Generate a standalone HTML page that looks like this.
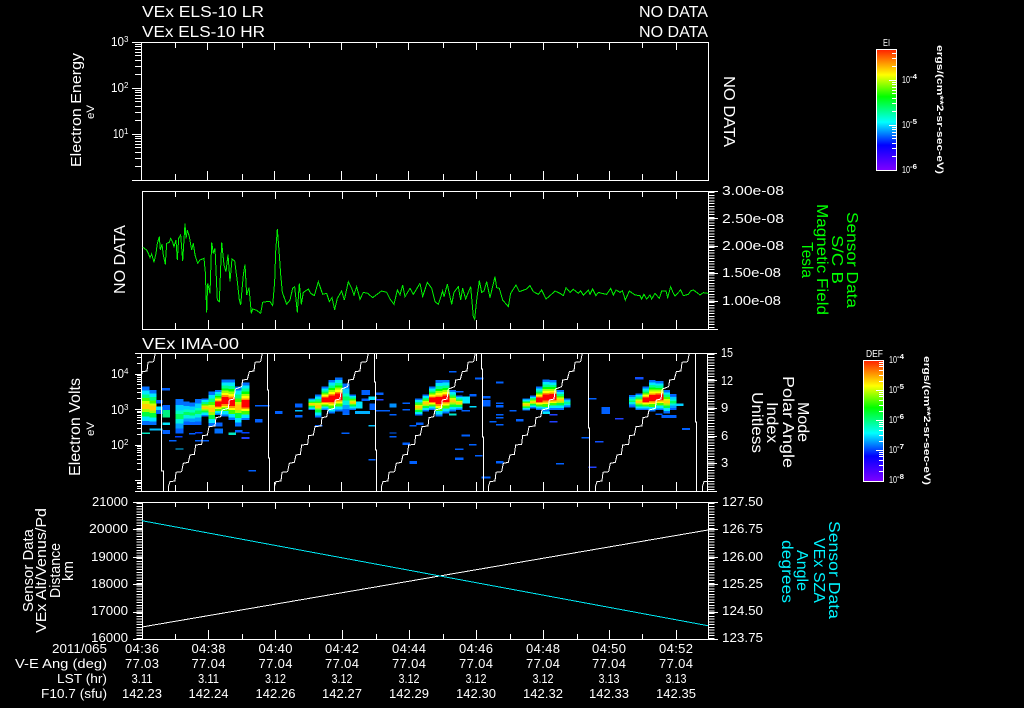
<!DOCTYPE html>
<html lang="en"><head><meta charset="utf-8"><title>VEx plot</title>
<style>
html,body{margin:0;padding:0;background:#000;width:1024px;height:708px;overflow:hidden}
svg{display:block}
text{font-family:"Liberation Sans",sans-serif;fill:#fff;font-size:13px}
.g text{fill:#00ff00}
.c text{fill:#00f4ff}
.t{font-size:15.5px}
.r{font-size:14.5px}
.s{font-size:8px}
.u{font-size:9px;font-weight:bold}
.bar{font-size:10px}
.l{stroke:#fff;stroke-width:1;fill:none;shape-rendering:crispEdges}
.tr{stroke:#fff;stroke-width:3;fill:none;shape-rendering:crispEdges}
.d{fill:none;stroke:#00f000;stroke-width:3;shape-rendering:crispEdges}
rect{shape-rendering:crispEdges}
</style></head><body>
<svg xmlns="http://www.w3.org/2000/svg" width="1024" height="708" viewBox="0 0 1024 708">
<defs>
<linearGradient id="cb" x1="0" y1="0" x2="0" y2="1"><stop offset="0" stop-color="#ff2000"/><stop offset=".21" stop-color="#ffff00"/><stop offset=".39" stop-color="#00ff00"/><stop offset=".6" stop-color="#00ffff"/><stop offset=".79" stop-color="#0000ff"/><stop offset="1" stop-color="#8000ff"/></linearGradient>
<linearGradient id="hi" x1="0" y1="0" x2="0" y2="1">
<stop offset="0" stop-color="#0070ff"/><stop offset=".08" stop-color="#0070ff"/><stop offset=".08" stop-color="#00e8ff"/><stop offset=".16" stop-color="#00e8ff"/><stop offset=".16" stop-color="#00ff90"/><stop offset=".24" stop-color="#00ff90"/><stop offset=".24" stop-color="#00ff00"/><stop offset=".3" stop-color="#00ff00"/><stop offset=".3" stop-color="#a0ff00"/><stop offset=".36" stop-color="#a0ff00"/><stop offset=".36" stop-color="#ffff00"/><stop offset=".42" stop-color="#ffff00"/><stop offset=".42" stop-color="#ff9000"/><stop offset=".47" stop-color="#ff9000"/><stop offset=".47" stop-color="#ff0000"/><stop offset=".66" stop-color="#ff0000"/><stop offset=".66" stop-color="#ff9000"/><stop offset=".71" stop-color="#ff9000"/><stop offset=".71" stop-color="#ffff00"/><stop offset=".76" stop-color="#ffff00"/><stop offset=".76" stop-color="#40ff00"/><stop offset=".85" stop-color="#40ff00"/><stop offset=".85" stop-color="#00e8ff"/><stop offset=".94" stop-color="#00e8ff"/><stop offset=".94" stop-color="#0070ff"/><stop offset="1" stop-color="#0070ff"/></linearGradient>
<linearGradient id="mi" x1="0" y1="0" x2="0" y2="1">
<stop offset="0" stop-color="#0070ff"/><stop offset=".1" stop-color="#0070ff"/><stop offset=".1" stop-color="#00e8ff"/><stop offset=".2" stop-color="#00e8ff"/><stop offset=".2" stop-color="#00ff80"/><stop offset=".3" stop-color="#00ff80"/><stop offset=".3" stop-color="#40ff00"/><stop offset=".38" stop-color="#40ff00"/><stop offset=".38" stop-color="#d0ff00"/><stop offset=".45" stop-color="#d0ff00"/><stop offset=".45" stop-color="#ffd000"/><stop offset=".58" stop-color="#ffd000"/><stop offset=".58" stop-color="#a0ff00"/><stop offset=".66" stop-color="#a0ff00"/><stop offset=".66" stop-color="#00ff40"/><stop offset=".78" stop-color="#00ff40"/><stop offset=".78" stop-color="#00e8ff"/><stop offset=".9" stop-color="#00e8ff"/><stop offset=".9" stop-color="#0070ff"/><stop offset="1" stop-color="#0070ff"/></linearGradient>
<linearGradient id="lo" x1="0" y1="0" x2="0" y2="1">
<stop offset="0" stop-color="#0070ff"/><stop offset=".18" stop-color="#0070ff"/><stop offset=".18" stop-color="#00d0ff"/><stop offset=".34" stop-color="#00d0ff"/><stop offset=".34" stop-color="#00ffc0"/><stop offset=".44" stop-color="#00ffc0"/><stop offset=".44" stop-color="#00ff60"/><stop offset=".58" stop-color="#00ff60"/><stop offset=".58" stop-color="#00f0e0"/><stop offset=".72" stop-color="#00f0e0"/><stop offset=".72" stop-color="#00a0ff"/><stop offset=".86" stop-color="#00a0ff"/><stop offset=".86" stop-color="#0060ff"/><stop offset="1" stop-color="#0060ff"/></linearGradient>
<clipPath id="p3"><rect x="142" y="353" width="566" height="138"/></clipPath>
<path id="st" class="tr" d="M115,439L115,425L120,410L135,408L138,382L155,380L160,355L175,352L180,330L193,328L197,300L215,298L218,272L232,270L237,245L255,243L258,218L272,215L276,195L295,190L298,165L312,162L316,132L335,125L338,105L352,103L358,80L372,78L375,52L392,50L397,25"/>
</defs>
<rect width="1024" height="708" fill="#000"/>

<!-- Titles -->
<text class="t" x="142" y="17" textLength="122" lengthAdjust="spacingAndGlyphs">VEx ELS-10 LR</text>
<text class="t" x="142" y="37" textLength="123" lengthAdjust="spacingAndGlyphs">VEx ELS-10 HR</text>
<text class="t" x="639" y="17" textLength="69" lengthAdjust="spacingAndGlyphs">NO DATA</text>
<text class="t" x="639" y="37" textLength="69" lengthAdjust="spacingAndGlyphs">NO DATA</text>
<text class="t" x="142" y="349" textLength="97" lengthAdjust="spacingAndGlyphs">VEx IMA-00</text>

<!-- Panel 1 -->
<path class="l" d="M132 42.5H708.5V180.5H132M141.5 42.5V180.5
M132 88.5H141M132 134.5H141
M135 74.5H141M135 66.5H141M135 60.5H141M135 55.5H141M135 52.5H141M135 49.5H141M135 46.5H141M135 44.5H141
M135 120.5H141M135 112.5H141M135 106.5H141M135 101.5H141M135 98.5H141M135 95.5H141M135 92.5H141M135 90.5H141
M135 166.5H141M135 158.5H141M135 152.5H141M135 147.5H141M135 144.5H141M135 141.5H141M135 138.5H141M135 136.5H141
M175.5 42V48M242.5 42V48M309.5 42V48M376.5 42V48M443.5 42V48M510.5 42V48M577.5 42V48M642.5 42V48
M207.5 42V50M274.5 42V50M341.5 42V50M408.5 42V50M476.5 42V50M543.5 42V50M609.5 42V50M676.5 42V50
M175.5 174V180M242.5 174V180M309.5 174V180M376.5 174V180M443.5 174V180M510.5 174V180M577.5 174V180M642.5 174V180
M207.5 171V180M274.5 171V180M341.5 171V180M408.5 171V180M476.5 171V180M543.5 171V180M609.5 171V180M676.5 171V180"/>
<text x="111" y="46" textLength="13" lengthAdjust="spacingAndGlyphs">10</text><text class="s" x="124" y="42">3</text>
<text x="111" y="92" textLength="13" lengthAdjust="spacingAndGlyphs">10</text><text class="s" x="124" y="88">2</text>
<text x="113" y="138" textLength="11" lengthAdjust="spacingAndGlyphs">10</text><text class="s" x="124" y="134">1</text>
<text class="r" transform="translate(81,167) rotate(-90)" textLength="114" lengthAdjust="spacingAndGlyphs">Electron Energy</text>
<text transform="translate(94,119) rotate(-90)" style="font-size:11px" textLength="14" lengthAdjust="spacingAndGlyphs">eV</text>
<text class="t" transform="translate(724,76) rotate(90)" textLength="71" lengthAdjust="spacingAndGlyphs">NO DATA</text>

<!-- Panel 2 -->
<path class="l" d="M142 191.5H718M142 329.5H718M142.5 191V330M708.5 191V330
M708 218.5H718M708 246.5H718M708 273.5H718M708 301.5H718
M175.5 191V197M242.5 191V197M309.5 191V197M376.5 191V197M443.5 191V197M510.5 191V197M577.5 191V197M642.5 191V197
M208.5 191V199M275.5 191V199M342.5 191V199M409.5 191V199M476.5 191V199M543.5 191V199M609.5 191V199M676.5 191V199
M175.5 323V329M242.5 323V329M309.5 323V329M376.5 323V329M443.5 323V329M510.5 323V329M577.5 323V329M642.5 323V329
M208.5 320V329M275.5 320V329M342.5 320V329M409.5 320V329M476.5 320V329M543.5 320V329M609.5 320V329M676.5 320V329"/>
<line x1="711.5" y1="192" x2="711.5" y2="329" stroke="#fff" stroke-width="6" stroke-dasharray="1 1.75" shape-rendering="crispEdges"/>
<g transform="translate(100,185) scale(.33333)"><polyline class="d" points="128,186 135,192 140,195 145,205 150,218 155,207 162,232 168,205 172,175 178,155 181,195 186,178 190,210 196,238 200,175 208,172 212,160 218,172 222,185 228,165 232,225 236,160 242,150 248,228 255,115 258,160 262,135 268,155 275,195 280,175 285,210 293,235 300,225 312,220 316,262 320,382 323,295 330,325 335,172 340,205 345,190 352,345 358,350 365,172 372,240 378,260 384,208 390,290 396,222 404,228 412,290 418,345 422,360 430,270 435,238 440,330 447,308 454,385 458,372 470,376 482,385 488,352 500,350 510,350 518,362 524,290 527,200 532,132 538,210 542,268 547,322 560,358 570,345 578,310 584,305 592,382 598,295 604,358 610,322 625,312 632,325 643,332 655,290 668,328 680,325 688,350 696,338 704,374 712,340 725,318 733,345 745,290 755,310 762,330 770,305 780,343 790,322 803,325 818,338 835,325 845,318 860,322 870,342 882,358 892,315 900,330 908,300 915,335 930,310 940,328 960,295"/></g>
<g transform="translate(420,185) scale(.33333)"><polyline class="d" points="0,295 8,335 22,292 35,310 45,350 55,358 68,318 72,335 82,298 95,358 102,322 115,305 122,345 128,310 137,342 152,305 160,395 164,403 170,345 178,287 185,322 192,318 200,290 210,338 225,275 230,308 238,310 248,345 265,365 272,325 288,300 298,320 320,312 330,302 340,320 355,328 365,315 378,342 390,332 405,318 420,325 430,332 438,308 450,322 460,313 475,325 482,318 490,330 505,315 510,328 518,312 528,332 535,322 545,325 560,328 572,310 580,330 588,315 600,322 607,317 616,345 628,318 645,330 660,332 665,342 672,328 680,342 690,330 695,342 705,325 718,340 725,318 738,318 743,338 752,305 760,325 765,333 782,315 790,332 805,328 812,318 820,315 830,322 840,330 850,323 865,325"/></g>
<text x="722" y="195" textLength="62" lengthAdjust="spacingAndGlyphs">3.00e-08</text>
<text x="722" y="223" textLength="62" lengthAdjust="spacingAndGlyphs">2.50e-08</text>
<text x="722" y="250" textLength="62" lengthAdjust="spacingAndGlyphs">2.00e-08</text>
<text x="722" y="277" textLength="59" lengthAdjust="spacingAndGlyphs">1.50e-08</text>
<text x="722" y="305" textLength="59" lengthAdjust="spacingAndGlyphs">1.00e-08</text>
<text class="t" transform="translate(125,294) rotate(-90)" textLength="69" lengthAdjust="spacingAndGlyphs">NO DATA</text>
<g class="g">
<text class="t" transform="translate(847,212) rotate(90)" textLength="96" lengthAdjust="spacingAndGlyphs">Sensor Data</text>
<text class="t" transform="translate(832,235) rotate(90)" textLength="49" lengthAdjust="spacingAndGlyphs">S/C B</text>
<text class="t" transform="translate(817,204) rotate(90)" textLength="111" lengthAdjust="spacingAndGlyphs">Magnetic Field</text>
<text class="t" transform="translate(802,242) rotate(90)" textLength="36" lengthAdjust="spacingAndGlyphs">Tesla</text>
</g>

<!-- Panel 3 spectrogram -->
<g clip-path="url(#p3)">
<g transform="translate(130,345) scale(.33333)">
<rect x="36" y="125" width="22" height="115" fill="url(#mi)"/><rect x="58" y="135" width="22" height="105" fill="url(#mi)"/>
<rect x="36" y="262" width="24" height="5" fill="#00e8c0"/><rect x="58" y="250" width="40" height="7" fill="#00c0ff"/>
<rect x="78" y="165" width="20" height="10" fill="#0060ff"/><rect x="78" y="185" width="20" height="10" fill="#00e8ff"/><rect x="78" y="195" width="20" height="12" fill="#0060ff"/>
<rect x="95" y="129" width="25" height="8" fill="#0060ff"/><rect x="98" y="180" width="22" height="15" fill="#0060ff"/><rect x="98" y="195" width="22" height="23" fill="#00f080"/><rect x="98" y="232" width="22" height="8" fill="#00e8ff"/><rect x="98" y="255" width="22" height="12" fill="#0060ff"/>
<rect x="136" y="162" width="24" height="103" fill="url(#lo)"/><rect x="160" y="170" width="18" height="70" fill="url(#lo)"/><rect x="178" y="172" width="20" height="68" fill="url(#lo)"/><rect x="195" y="162" width="20" height="78" fill="url(#lo)"/><rect x="215" y="160" width="20" height="55" fill="url(#mi)"/><rect x="235" y="140" width="20" height="105" fill="url(#mi)"/><rect x="255" y="135" width="20" height="75" fill="url(#hi)"/><rect x="275" y="103" width="20" height="112" fill="url(#hi)"/><rect x="295" y="103" width="20" height="122" fill="url(#hi)"/><rect x="315" y="125" width="20" height="120" fill="url(#mi)"/><rect x="335" y="113" width="23" height="112" fill="url(#hi)"/>
<rect x="255" y="232" width="22" height="12" fill="#0060ff"/><rect x="253" y="250" width="26" height="16" fill="#0070ff"/><rect x="295" y="262" width="23" height="8" fill="#00e8c0"/><rect x="315" y="255" width="22" height="8" fill="#0060ff"/><rect x="335" y="261" width="24" height="5" fill="#0040ff"/><rect x="335" y="276" width="24" height="6" fill="#2040ff"/>
<rect x="375" y="180" width="43" height="5" fill="#0060ff"/><rect x="375" y="222" width="23" height="11" fill="#0060ff"/><rect x="435" y="198" width="23" height="9" fill="#0060ff"/><rect x="495" y="175" width="23" height="13" fill="#0060ff"/><rect x="495" y="195" width="23" height="5" fill="#00c0ff"/><rect x="495" y="210" width="23" height="8" fill="#0060ff"/><rect x="555" y="240" width="23" height="5" fill="#0060ff"/><rect x="636" y="262" width="22" height="5" fill="#0060ff"/><rect x="117" y="285" width="23" height="5" fill="#0060ff"/><rect x="195" y="285" width="42" height="5" fill="#0060ff"/><rect x="355" y="375" width="23" height="5" fill="#0060ff"/><rect x="136" y="310" width="24" height="4" fill="#00c0ff"/><rect x="135" y="273" width="23" height="5" fill="#0040ff"/><rect x="177" y="264" width="20" height="5" fill="#0060ff"/><rect x="195" y="261" width="22" height="5" fill="#0040ff"/>
<rect x="535" y="160" width="20" height="35" fill="url(#mi)"/><rect x="555" y="148" width="20" height="70" fill="url(#mi)"/><rect x="575" y="125" width="20" height="70" fill="url(#hi)"/><rect x="595" y="105" width="20" height="100" fill="url(#hi)"/><rect x="615" y="97" width="22" height="103" fill="url(#hi)"/><rect x="637" y="117" width="21" height="93" fill="url(#mi)"/>
</g>
<g transform="translate(340,345) scale(.33333)">
<rect x="8" y="115" width="20" height="90" fill="url(#lo)"/><rect x="28" y="148" width="20" height="47" fill="url(#mi)"/><rect x="48" y="170" width="20" height="20" fill="#00e8ff"/>
<rect x="65" y="135" width="25" height="15" fill="#0060ff"/><rect x="65" y="160" width="25" height="8" fill="#0060ff"/><rect x="85" y="155" width="25" height="10" fill="#00e8ff"/><rect x="88" y="175" width="20" height="20" fill="#0060ff"/><rect x="45" y="198" width="45" height="9" fill="#00b0ff"/><rect x="5" y="262" width="23" height="5" fill="#0060ff"/><rect x="85" y="240" width="22" height="5" fill="#00c0ff"/><rect x="85" y="342" width="22" height="5" fill="#0060ff"/>
<rect x="108" y="142" width="22" height="8" fill="#0060ff"/><rect x="108" y="162" width="22" height="5" fill="#2040ff"/><rect x="108" y="195" width="42" height="5" fill="#0060ff"/><rect x="148" y="175" width="22" height="13" fill="#0090ff"/><rect x="148" y="207" width="22" height="5" fill="#0060ff"/><rect x="187" y="172" width="23" height="5" fill="#0060ff"/><rect x="187" y="192" width="23" height="5" fill="#0060ff"/><rect x="228" y="232" width="22" height="8" fill="#0060ff"/><rect x="208" y="240" width="22" height="5" fill="#0060ff"/><rect x="148" y="262" width="22" height="4" fill="#0060ff"/><rect x="148" y="273" width="22" height="5" fill="#0060ff"/><rect x="187" y="292" width="23" height="8" fill="#0060ff"/><rect x="208" y="348" width="23" height="9" fill="#0060ff"/>
<rect x="327" y="78" width="23" height="5" fill="#0060ff"/><rect x="405" y="97" width="25" height="7" fill="#0060ff"/><rect x="468" y="109" width="22" height="7" fill="#0060ff"/><rect x="428" y="153" width="24" height="7" fill="#0060ff"/><rect x="428" y="165" width="24" height="20" fill="#0060ff"/><rect x="468" y="172" width="22" height="5" fill="#0060ff"/><rect x="468" y="180" width="22" height="8" fill="#0060ff"/><rect x="468" y="207" width="22" height="5" fill="#0060ff"/><rect x="468" y="216" width="22" height="5" fill="#0060ff"/><rect x="508" y="195" width="22" height="5" fill="#0060ff"/><rect x="528" y="222" width="22" height="8" fill="#0060ff"/><rect x="448" y="228" width="22" height="5" fill="#0060ff"/><rect x="468" y="237" width="22" height="5" fill="#0060ff"/><rect x="365" y="268" width="25" height="7" fill="#0060ff"/><rect x="387" y="297" width="23" height="5" fill="#0060ff"/><rect x="345" y="310" width="25" height="5" fill="#0060ff"/><rect x="345" y="337" width="25" height="8" fill="#0060ff"/><rect x="405" y="330" width="23" height="5" fill="#0060ff"/><rect x="468" y="348" width="22" height="8" fill="#0060ff"/><rect x="425" y="394" width="27" height="7" fill="#0060ff"/>
<rect x="225" y="160" width="22" height="52" fill="url(#mi)"/><rect x="247" y="148" width="20" height="52" fill="url(#mi)"/><rect x="267" y="125" width="20" height="70" fill="url(#hi)"/><rect x="287" y="105" width="20" height="110" fill="url(#hi)"/><rect x="307" y="105" width="21" height="100" fill="url(#hi)"/><rect x="328" y="135" width="20" height="65" fill="url(#mi)"/><rect x="348" y="152" width="20" height="43" fill="url(#mi)"/><rect x="368" y="155" width="22" height="20" fill="#00e8ff"/>
<rect x="388" y="147" width="22" height="8" fill="#0060ff"/><rect x="388" y="183" width="22" height="5" fill="#00e0ff"/><rect x="327" y="205" width="23" height="7" fill="#00e8d0"/><rect x="345" y="138" width="25" height="5" fill="#0060ff"/><rect x="365" y="195" width="25" height="5" fill="#0060ff"/>
</g>
<g transform="translate(530,345) scale(.33333)">
<rect x="-22" y="160" width="22" height="37" fill="url(#mi)"/><rect x="0" y="152" width="18" height="38" fill="url(#mi)"/><rect x="18" y="125" width="20" height="70" fill="url(#hi)"/><rect x="38" y="103" width="20" height="97" fill="url(#hi)"/><rect x="58" y="105" width="22" height="90" fill="url(#hi)"/><rect x="80" y="135" width="22" height="60" fill="url(#mi)"/><rect x="102" y="160" width="20" height="28" fill="url(#lo)"/>
<rect x="38" y="200" width="22" height="7" fill="#00e8ff"/><rect x="58" y="207" width="24" height="5" fill="#2040ff"/><rect x="58" y="228" width="24" height="5" fill="#2040ff"/><rect x="78" y="354" width="24" height="5" fill="#0060ff"/><rect x="155" y="276" width="23" height="5" fill="#0060ff"/><rect x="195" y="288" width="25" height="5" fill="#1050ff"/><rect x="175" y="364" width="25" height="5" fill="#2040ff"/><rect x="177" y="159" width="23" height="5" fill="#0060ff"/><rect x="215" y="186" width="25" height="21" fill="#0060ff"/><rect x="255" y="219" width="25" height="5" fill="#2040ff"/><rect x="315" y="96" width="25" height="8" fill="#1050ff"/><rect x="456" y="249" width="24" height="6" fill="#0060ff"/>
<rect x="297" y="150" width="20" height="37" fill="url(#lo)"/><rect x="317" y="145" width="20" height="50" fill="url(#mi)"/><rect x="337" y="125" width="20" height="70" fill="url(#hi)"/><rect x="357" y="105" width="20" height="95" fill="url(#hi)"/><rect x="377" y="108" width="23" height="87" fill="url(#hi)"/><rect x="400" y="135" width="20" height="70" fill="url(#mi)"/><rect x="420" y="147" width="20" height="48" fill="url(#lo)"/>
<rect x="437" y="175" width="23" height="8" fill="#00d0ff"/><rect x="395" y="210" width="45" height="9" fill="#0060ff"/><rect x="377" y="205" width="20" height="5" fill="#0060ff"/><rect x="420" y="148" width="20" height="5" fill="#0060ff"/>
</g>
<g transform="translate(130,345) scale(.33333)">
<use href="#st" x="-321"/><use href="#st"/><use href="#st" x="318"/><use href="#st" x="639"/><use href="#st" x="960"/><use href="#st" x="1281"/><use href="#st" x="1602"/>
</g>
<path class="l" d="M161.5 353V471H163.5V491M267.5 353V390H268.5V458H269.5V491M374.5 353V382H375.5V450H376.5V491M481.5 353V369H482.5V437H483.5V491M588.5 353V428H589.5V491M695.5 353V422H696.5V491"/>
</g>
<path class="l" d="M135 353.5H717M135 491.5H717M141.5 353V492M707.5 353V492
M135 374.5H141M135 409.5H141M135 445.5H141M135 480.5H141
M137 363.5H141M137 357.5H141
M137 398.5H141M137 392.5H141M137 388.5H141M137 384.5H141M137 381.5H141M137 379.5H141M137 377.5H141M137 375.5H141
M137 434.5H141M137 428.5H141M137 423.5H141M137 420.5H141M137 417.5H141M137 415.5H141M137 412.5H141M137 411.5H141
M137 469.5H141M137 463.5H141M137 459.5H141M137 455.5H141M137 452.5H141M137 450.5H141M137 448.5H141M137 446.5H141
M137 488.5H141M137 486.5H141M137 483.5H141M137 482.5H141
M707 380.5H717M707 408.5H717M707 436.5H717M707 463.5H717
M175.5 353V359M242.5 353V359M309.5 353V359M376.5 353V359M443.5 353V359M510.5 353V359M577.5 353V359M642.5 353V359
M207.5 353V361M274.5 353V361M341.5 353V361M408.5 353V361M476.5 353V361M543.5 353V361M609.5 353V361M676.5 353V361
M175.5 485V491M242.5 485V491M309.5 485V491M376.5 485V491M443.5 485V491M510.5 485V491M577.5 485V491M642.5 485V491
M207.5 482V491M274.5 482V491M341.5 482V491M408.5 482V491M476.5 482V491M543.5 482V491M609.5 482V491M676.5 482V491"/>
<line x1="711" y1="354" x2="711" y2="491" stroke="#fff" stroke-width="7" stroke-dasharray="1 1.76" shape-rendering="crispEdges"/>
<text x="111" y="378" textLength="13" lengthAdjust="spacingAndGlyphs">10</text><text class="s" x="124" y="374">4</text>
<text x="111" y="414" textLength="13" lengthAdjust="spacingAndGlyphs">10</text><text class="s" x="124" y="410">3</text>
<text x="111" y="449" textLength="13" lengthAdjust="spacingAndGlyphs">10</text><text class="s" x="124" y="445">2</text>
<text class="t" transform="translate(80,476) rotate(-90)" textLength="98" lengthAdjust="spacingAndGlyphs">Electron Volts</text>
<text transform="translate(94,436) rotate(-90)" style="font-size:11px" textLength="14" lengthAdjust="spacingAndGlyphs">eV</text>
<text x="721" y="357" textLength="12" lengthAdjust="spacingAndGlyphs">15</text>
<text x="721" y="385" textLength="12" lengthAdjust="spacingAndGlyphs">12</text>
<text x="721" y="412">9</text><text x="721" y="440">6</text><text x="721" y="467">3</text>
<text class="t" transform="translate(798,402) rotate(90)" textLength="40" lengthAdjust="spacingAndGlyphs">Mode</text>
<text class="t" transform="translate(783,376) rotate(90)" textLength="92" lengthAdjust="spacingAndGlyphs">Polar Angle</text>
<text class="t" transform="translate(767,402) rotate(90)" textLength="41" lengthAdjust="spacingAndGlyphs">Index</text>
<text class="t" transform="translate(752,392) rotate(90)" textLength="61" lengthAdjust="spacingAndGlyphs">Unitless</text>

<!-- Panel 4 -->
<path class="l" d="M133 502.5H718M133 639.5H718M142.5 502V640M708.5 502V640
M133 529.5H142M133 557.5H142M133 584.5H142M133 612.5H142
M708 529.5H718M708 557.5H718M708 584.5H718M708 612.5H718
M175.5 502V507M242.5 502V507M309.5 502V507M376.5 502V507M443.5 502V507M510.5 502V507M577.5 502V507M642.5 502V507
M208.5 502V509M275.5 502V509M342.5 502V509M409.5 502V509M476.5 502V509M543.5 502V509M609.5 502V509M676.5 502V509
M175.5 634V639M242.5 634V639M309.5 634V639M376.5 634V639M443.5 634V639M510.5 634V639M577.5 634V639M642.5 634V639
M208.5 630V639M275.5 630V639M342.5 630V639M409.5 630V639M476.5 630V639M543.5 630V639M609.5 630V639M676.5 630V639"/>
<line x1="139.5" y1="503" x2="139.5" y2="640" stroke="#fff" stroke-width="6" stroke-dasharray="1 1.75" shape-rendering="crispEdges"/>
<line x1="711.5" y1="503" x2="711.5" y2="640" stroke="#fff" stroke-width="6" stroke-dasharray="1 1.75" shape-rendering="crispEdges"/>
<line x1="142" y1="627" x2="708" y2="530" stroke="#fff" stroke-width="1" shape-rendering="crispEdges"/>
<line x1="142" y1="520.7" x2="708" y2="625.7" stroke="#00e8f4" stroke-width="1" shape-rendering="crispEdges"/>
<text x="92" y="506" textLength="36" lengthAdjust="spacingAndGlyphs">21000</text>
<text x="89" y="533" textLength="39" lengthAdjust="spacingAndGlyphs">20000</text>
<text x="91" y="561" textLength="37" lengthAdjust="spacingAndGlyphs">19000</text>
<text x="91" y="588" textLength="37" lengthAdjust="spacingAndGlyphs">18000</text>
<text x="91" y="615" textLength="37" lengthAdjust="spacingAndGlyphs">17000</text>
<text x="91" y="642" textLength="37" lengthAdjust="spacingAndGlyphs">16000</text>
<text x="722" y="506" textLength="41" lengthAdjust="spacingAndGlyphs">127.50</text>
<text x="722" y="533" textLength="41" lengthAdjust="spacingAndGlyphs">126.75</text>
<text x="722" y="561" textLength="41" lengthAdjust="spacingAndGlyphs">126.00</text>
<text x="722" y="588" textLength="41" lengthAdjust="spacingAndGlyphs">125.25</text>
<text x="722" y="615" textLength="41" lengthAdjust="spacingAndGlyphs">124.50</text>
<text x="722" y="642" textLength="41" lengthAdjust="spacingAndGlyphs">123.75</text>
<text class="r" transform="translate(33,612) rotate(-90)" textLength="83" lengthAdjust="spacingAndGlyphs">Sensor Data</text>
<text class="r" transform="translate(46,633) rotate(-90)" textLength="125" lengthAdjust="spacingAndGlyphs">VEx Alt/Venus/Pd</text>
<text class="r" transform="translate(60,598) rotate(-90)" textLength="55" lengthAdjust="spacingAndGlyphs">Distance</text>
<text class="r" transform="translate(73,581) rotate(-90)" textLength="20" lengthAdjust="spacingAndGlyphs">km</text>
<g class="c">
<text class="t" transform="translate(829,521) rotate(90)" textLength="98" lengthAdjust="spacingAndGlyphs">Sensor Data</text>
<text class="t" transform="translate(814,538) rotate(90)" textLength="65" lengthAdjust="spacingAndGlyphs">VEx SZA</text>
<text class="t" transform="translate(797,550) rotate(90)" textLength="41" lengthAdjust="spacingAndGlyphs">Angle</text>
<text class="t" transform="translate(782,540) rotate(90)" textLength="63" lengthAdjust="spacingAndGlyphs">degrees</text>
</g>

<!-- Bottom annotation -->
<text x="52" y="653" textLength="55" lengthAdjust="spacingAndGlyphs">2011/065</text>
<text x="15" y="668" textLength="92" lengthAdjust="spacingAndGlyphs">V-E Ang (deg)</text>
<text x="57" y="683" textLength="50" lengthAdjust="spacingAndGlyphs">LST (hr)</text>
<text x="41" y="698" textLength="66" lengthAdjust="spacingAndGlyphs">F10.7 (sfu)</text>
<g text-anchor="middle">
<text x="142" y="653" textLength="34">04:36</text><text x="208.5" y="653" textLength="34">04:38</text><text x="275.5" y="653" textLength="34">04:40</text><text x="342" y="653" textLength="34">04:42</text><text x="409" y="653" textLength="34">04:44</text><text x="476" y="653" textLength="34">04:46</text><text x="543" y="653" textLength="34">04:48</text><text x="609" y="653" textLength="34">04:50</text><text x="676" y="653" textLength="34">04:52</text>
<text x="142" y="668" textLength="34">77.03</text><text x="208.5" y="668" textLength="34">77.04</text><text x="275.5" y="668" textLength="34">77.04</text><text x="342" y="668" textLength="34">77.04</text><text x="409" y="668" textLength="34">77.04</text><text x="476" y="668" textLength="34">77.04</text><text x="543" y="668" textLength="34">77.04</text><text x="609" y="668" textLength="34">77.04</text><text x="676" y="668" textLength="34">77.04</text>
<text x="142" y="683" textLength="21" lengthAdjust="spacingAndGlyphs">3.11</text><text x="208.5" y="683" textLength="21" lengthAdjust="spacingAndGlyphs">3.11</text><text x="275.5" y="683" textLength="21" lengthAdjust="spacingAndGlyphs">3.12</text><text x="342" y="683" textLength="21" lengthAdjust="spacingAndGlyphs">3.12</text><text x="409" y="683" textLength="21" lengthAdjust="spacingAndGlyphs">3.12</text><text x="476" y="683" textLength="21" lengthAdjust="spacingAndGlyphs">3.12</text><text x="543" y="683" textLength="21" lengthAdjust="spacingAndGlyphs">3.12</text><text x="609" y="683" textLength="21" lengthAdjust="spacingAndGlyphs">3.13</text><text x="676" y="683" textLength="21" lengthAdjust="spacingAndGlyphs">3.13</text>
<text x="142" y="698" textLength="40">142.23</text><text x="208.5" y="698" textLength="40">142.24</text><text x="275.5" y="698" textLength="40">142.26</text><text x="342" y="698" textLength="40">142.27</text><text x="409" y="698" textLength="40">142.29</text><text x="476" y="698" textLength="40">142.30</text><text x="543" y="698" textLength="40">142.32</text><text x="609" y="698" textLength="40">142.33</text><text x="676" y="698" textLength="40">142.35</text>
</g>

<!-- Colorbar EI -->
<rect x="876.5" y="49.5" width="20" height="121" fill="url(#cb)" stroke="#fff" stroke-width="1"/>
<path class="l" d="M889 80.5H896M889 125.5H896
M892 53.5H896M892 58.5H896M892 66.5H896
M892 82.5H896M892 84.5H896M892 87.5H896M892 90.5H896M892 93.5H896M892 98.5H896M892 103.5H896M892 111.5H896
M892 127.5H896M892 129.5H896M892 132.5H896M892 135.5H896M892 138.5H896M892 143.5H896M892 148.5H896M892 156.5H896"/>
<text class="bar" x="883" y="46" textLength="7" lengthAdjust="spacingAndGlyphs">EI</text>
<text class="bar" x="902" y="83" textLength="8" lengthAdjust="spacingAndGlyphs">10</text><text x="910" y="79" style="font-size:7px;font-weight:bold" textLength="7" lengthAdjust="spacingAndGlyphs">-4</text>
<text class="bar" x="902" y="128" textLength="8" lengthAdjust="spacingAndGlyphs">10</text><text x="910" y="124" style="font-size:7px;font-weight:bold" textLength="7" lengthAdjust="spacingAndGlyphs">-5</text>
<text class="bar" x="902" y="173" textLength="8" lengthAdjust="spacingAndGlyphs">10</text><text x="910" y="169" style="font-size:7px;font-weight:bold" textLength="7" lengthAdjust="spacingAndGlyphs">-6</text>
<text class="u" transform="translate(937,45) rotate(90)" textLength="129" lengthAdjust="spacingAndGlyphs">ergs/(cm**2-sr-sec-eV)</text>

<!-- Colorbar DEF -->
<rect x="863.5" y="360.5" width="20" height="121" fill="url(#cb)" stroke="#fff" stroke-width="1"/>
<path class="l" d="M876 390.5H883M876 420.5H883M876 450.5H883
M879 362.5H883M879 364.5H883M879 366.5H883M879 370.5H883M879 375.5H883M879 381.5H883
M879 392.5H883M879 394.5H883M879 396.5H883M879 400.5H883M879 405.5H883M879 411.5H883
M879 422.5H883M879 424.5H883M879 426.5H883M879 430.5H883M879 435.5H883M879 441.5H883
M879 452.5H883M879 454.5H883M879 456.5H883M879 460.5H883M879 465.5H883M879 471.5H883"/>
<text class="bar" x="866" y="357" textLength="17" lengthAdjust="spacingAndGlyphs">DEF</text>
<text class="bar" x="889" y="363" textLength="8" lengthAdjust="spacingAndGlyphs">10</text><text x="897" y="359" style="font-size:7px;font-weight:bold" textLength="7" lengthAdjust="spacingAndGlyphs">-4</text>
<text class="bar" x="889" y="393" textLength="8" lengthAdjust="spacingAndGlyphs">10</text><text x="897" y="389" style="font-size:7px;font-weight:bold" textLength="7" lengthAdjust="spacingAndGlyphs">-5</text>
<text class="bar" x="889" y="423" textLength="8" lengthAdjust="spacingAndGlyphs">10</text><text x="897" y="419" style="font-size:7px;font-weight:bold" textLength="7" lengthAdjust="spacingAndGlyphs">-6</text>
<text class="bar" x="889" y="453" textLength="8" lengthAdjust="spacingAndGlyphs">10</text><text x="897" y="449" style="font-size:7px;font-weight:bold" textLength="7" lengthAdjust="spacingAndGlyphs">-7</text>
<text class="bar" x="889" y="483" textLength="8" lengthAdjust="spacingAndGlyphs">10</text><text x="897" y="479" style="font-size:7px;font-weight:bold" textLength="7" lengthAdjust="spacingAndGlyphs">-8</text>
<text class="u" transform="translate(924,356) rotate(90)" textLength="129" lengthAdjust="spacingAndGlyphs">ergs/(cm**2-sr-sec-eV)</text>
</svg>
</body></html>
